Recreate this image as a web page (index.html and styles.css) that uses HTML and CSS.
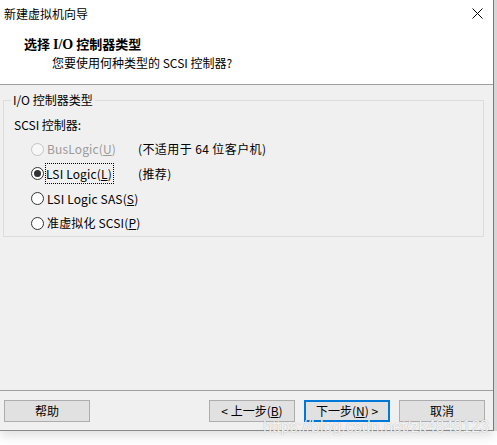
FILE: index.html
```html
<!DOCTYPE html>
<html lang="zh-CN">
<head>
<meta charset="utf-8">
<title>新建虚拟机向导</title>
<link rel="stylesheet" href="styles.css">
</head>
<body>
<div class="screen">
  <div class="window">
    <div class="titlebar">
      <span class="title">新建虚拟机向导</span>
      <svg class="close" width="11" height="11" viewBox="0 0 11 11"><path d="M0.5 0.5 L10.5 10.5 M10.5 0.5 L0.5 10.5" stroke="#000" stroke-width="1" fill="none"/></svg>
    </div>
    <div class="header">
      <div class="heading">选择 <span class="serif">I/O</span> 控制器类型</div>
      <div class="subheading">您要使用何种类型的 SCSI 控制器?</div>
    </div>
    <div class="content">
      <fieldset class="group">
        <legend class="legend">I/O 控制器类型</legend>
        <div class="label">SCSI 控制器:</div>
        <div class="options">
          <div class="option disabled">
            <span class="radio"></span>
            <span class="text">BusLogic(<u>U</u>)</span>
            <span class="note">(不适用于 64 位客户机)</span>
          </div>
          <div class="option">
            <span class="radio checked"></span>
            <span class="text"><span class="focus">LSI Logic(<u>L</u>)</span></span>
            <span class="note">(推荐)</span>
          </div>
          <div class="option">
            <span class="radio"></span>
            <span class="text wide">LSI Logic SAS(<u>S</u>)</span>
          </div>
          <div class="option">
            <span class="radio"></span>
            <span class="text wide">准虚拟化 SCSI(<u>P</u>)</span>
          </div>
        </div>
      </fieldset>
    </div>
    <div class="footer">
      <button class="btn">帮助</button>
      <div class="nav">
        <button class="btn">&lt; 上一步(<u>B</u>)</button>
        <button class="btn primary">下一步(<u>N</u>) &gt;</button>
        <button class="btn">取消</button>
      </div>
    </div>
  </div>
  <div class="strip"></div>
  <div class="watermark">https://blog.csdn.net/zk4848123</div>
</div>
</body>
</html>
```

FILE: styles.css
```css
* { box-sizing: border-box; }
html, body {
  margin: 0;
  padding: 0;
  background: #ffffff;
}
body {
  font-family: "Noto Sans CJK SC", "Noto Sans", sans-serif;
  font-size: 12px;
  color: #000;
  width: 497px;
  height: 445px;
  overflow: hidden;
}
.screen {
  position: relative;
  display: flex;
  align-items: flex-start;
  width: 497px;
  height: 445px;
}
.window {
  width: 494px;
  height: 431px;
  display: flex;
  flex-direction: column;
  border-right: 1px solid #7a7a7a;
  border-bottom: 1px solid #8a8a8a;
  box-shadow: 0 5px 10px rgba(0, 0, 0, 0.12);
  background: #f0f0f0;
}
.strip {
  flex: 1;
  height: 431px;
  background: #d6d6d6;
}
.titlebar {
  height: 28px;
  background: #fff;
  display: flex;
  align-items: center;
  padding: 0 0 0 4px;
}
.title {
  line-height: 16px;
}
.close {
  margin-left: auto;
  margin-right: 10px;
  margin-top: -1px;
}
.header {
  height: 57px;
  background: #fff;
  border-bottom: 1px solid #a0a0a0;
  padding-top: 7px;
}
.heading {
  font-weight: bold;
  font-size: 13px;
  line-height: 18px;
  padding-left: 24px;
}
.serif {
  font-family: "Liberation Serif", "DejaVu Serif", serif;
  font-size: 14px;
}
.subheading {
  line-height: 18px;
  padding-left: 52px;
}
.content {
  flex: 1;
  background: #f0f0f0;
  border-bottom: 1px solid #a0a0a0;
}
.group {
  margin: 7px 9px 0 3px;
  padding: 0 0 0 10px;
  border: 1px solid #dcdcdc;
  min-width: 0;
}
.legend {
  margin-left: -3px;
  padding: 0 2px;
  line-height: 16px;
}
.label {
  margin-top: 8px;
  line-height: 18px;
}
.options {
  margin-top: 3px;
  display: flex;
  flex-direction: column;
}
.option {
  height: 24.67px;
  display: flex;
  align-items: center;
  padding-left: 17px;
}
.radio {
  width: 13px;
  height: 13px;
  border: 1px solid #333;
  border-radius: 50%;
  background: #fff;
  display: flex;
  align-items: center;
  justify-content: center;
  flex: none;
}
.radio.checked::after {
  content: "";
  width: 7px;
  height: 7px;
  border-radius: 50%;
  background: #333;
}
.disabled .radio {
  border-color: #c4c4c4;
  background: #f7f7f7;
}
.text {
  margin-left: 3px;
  width: 91px;
  line-height: 16px;
  flex: none;
  letter-spacing: 0.15px;
}
.text.wide { width: auto; }
.disabled .text { color: #9a9a9a; }
.focus {
  outline: 1px dotted #000;
  outline-offset: 0;
  padding: 1px 1px 1px 0;
  margin-left: -1px;
}
.note {
  line-height: 16px;
  letter-spacing: 0.4px;
}
.footer {
  height: 39px;
  display: flex;
  align-items: flex-start;
  padding: 9px 8px 0 4px;
}
.nav {
  margin-left: auto;
  display: flex;
  gap: 9px;
}
.btn {
  width: 86px;
  height: 22px;
  border: 1px solid #adadad;
  background: #e1e1e1;
  font-family: "Noto Sans CJK SC", "Noto Sans", sans-serif;
  font-size: 12px;
  color: #000;
  padding: 0;
  line-height: 18px;
}
.btn.primary {
  border: 2px solid #0078d7;
}
.watermark {
  position: absolute;
  left: 263px;
  top: 421px;
  font-family: "Liberation Sans", sans-serif;
  font-size: 16px;
  line-height: 12px;
  color: rgba(255, 255, 255, 0.9);
  text-shadow: 0 0 1px rgba(0, 0, 0, 0.35);
  white-space: nowrap;
  letter-spacing: 0;
}
```
